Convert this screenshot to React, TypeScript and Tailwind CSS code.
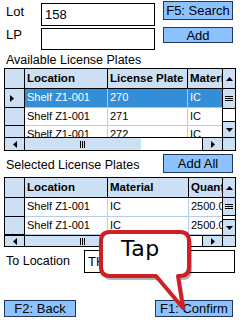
type Col = { label: string; w: string };
type Row = { cells: string[]; h: string; selected?: boolean; marker?: boolean };

const lightBlue = "bg-[#cddff2]";

function Tri({ dir }: { dir: "up" | "down" | "left" | "right" }) {
    if (dir === "up") return <svg width="7" height="4" viewBox="0 0 7 4"><polygon points="0,4 3.5,0 7,4" fill="#000" /></svg>;
    if (dir === "down") return <svg width="7" height="4" viewBox="0 0 7 4"><polygon points="0,0 7,0 3.5,4" fill="#000" /></svg>;
    if (dir === "left") return <svg width="4" height="7" viewBox="0 0 4 7"><polygon points="4,0 4,7 0,3.5" fill="#000" /></svg>;
    return <svg width="4" height="7" viewBox="0 0 4 7"><polygon points="0,0 0,7 4,3.5" fill="#000" /></svg>;
}

function Grip({ vertical }: { vertical?: boolean }) {
    // ≡ on the vertical bar, ||| on the horizontal one
    return vertical ? (
        <svg width="8" height="6" viewBox="0 0 8 6"><path d="M0 0.5H8M0 2.5H8M0 4.5H8" stroke="#000" strokeWidth="1" /></svg>
    ) : (
        <svg width="6" height="7" viewBox="0 0 6 7"><path d="M0.5 0V7M2.5 0V7M4.5 0V7" stroke="#000" strokeWidth="1" /></svg>
    );
}

function DataGrid({ cols, rows, bodyH, hbarH, thumbH, downH }: { cols: Col[]; rows: Row[]; bodyH: string; hbarH: string; thumbH: string; downH: string }) {
    return (
        <div className="mx-[4px] w-[232px] border border-black bg-white flex flex-col">
            <div className={`flex ${bodyH}`}>
                <div className="w-[217px] overflow-hidden">
                    <div className="flex h-[20px]">
                        <div className={`w-[20px] shrink-0 border-r border-b border-black ${lightBlue}`}></div>
                        {cols.map((c, i) => (
                            <div key={c.label} className={`${c.w} shrink-0 overflow-hidden whitespace-nowrap border-b border-black ${i < cols.length - 1 ? "border-r" : ""} ${lightBlue} pl-[2px] text-[11.5px] font-bold leading-[19px]`}>
                                {c.label}
                            </div>
                        ))}
                    </div>
                    {rows.map((r, ri) => (
                        <div key={ri} className={`flex ${r.h}`}>
                            <div className={`w-[20px] shrink-0 border-r border-b border-black ${lightBlue} flex items-center pl-[5px]`}>
                                {r.marker && <Tri dir="right" />}
                            </div>
                            {r.cells.map((t, i) => (
                                <div key={i} className={`${cols[i].w} shrink-0 overflow-hidden whitespace-nowrap border-b ${i < cols.length - 1 ? "border-r" : ""} ${r.selected ? "bg-[#338dd7] text-white border-[#a9cbeb]" : "border-[#b7cde7]"} pl-[2px] text-[11px] leading-[17px]`}>
                                    {t}
                                </div>
                            ))}
                        </div>
                    ))}
                </div>
                <div className={`w-[13px] border-l border-black ${lightBlue} flex flex-col`}>
                    <div className="h-[20px] border-b border-black flex items-center justify-center"><Tri dir="up" /></div>
                    <div className={`${thumbH} border-b border-black flex items-center justify-center`}><Grip vertical /></div>
                    <div className="flex-1 bg-white"></div>
                    <div className={`${downH} border-t border-black flex items-center justify-center`}><Tri dir="down" /></div>
                </div>
            </div>
            <div className={`flex ${hbarH} border-t border-black`}>
                <div className={`w-[20px] border-r border-black ${lightBlue} flex items-center justify-center`}><Tri dir="left" /></div>
                <div className={`w-[116px] ${lightBlue} flex items-center justify-center`}><Grip /></div>
                <div className="w-[61px] bg-white"></div>
                <div className={`w-[20px] border-l border-black ${lightBlue} flex items-center justify-center`}><Tri dir="right" /></div>
                <div className={`w-[13px] border-l border-black ${lightBlue}`}></div>
            </div>
        </div>
    );
}

function Btn({ children, className }: { children: string; className: string }) {
    return (
        <button className={`${className} bg-[#8cc3ff] border border-[#22385c] flex items-center justify-center text-[13px] leading-none text-black`}>
            {children}
        </button>
    );
}

export default function App() {
    return (
        <div className="relative w-[240px] h-[320px] overflow-hidden bg-white text-black flex flex-col font-['Liberation_Sans',Arial,sans-serif]">
            <div className="flex h-[26px] shrink-0">
                <span className="w-[41px] pl-[6px] pt-[4px] text-[13px] leading-[16px]">Lot</span>
                <div className="mt-[3px] w-[114px] h-[23px] border border-black pl-[3px] text-[13px] leading-[21px]">158</div>
                <Btn className="ml-[8px] mt-[1px] w-[70px] h-[19px]">F5: Search</Btn>
            </div>
            <div className="flex h-[24px] shrink-0">
                <span className="w-[41px] pl-[6px] pt-[1px] text-[13px] leading-[16px]">LP</span>
                <div className="mt-[2px] w-[114px] h-[22px] border border-black"></div>
                <Btn className="ml-[8px] mt-[1px] w-[70px] h-[16px]">Add</Btn>
            </div>
            <div className="h-[18px] shrink-0 pl-[6px] pt-[3px] text-[12.5px] leading-[15px]">Available License Plates</div>
            <DataGrid
                cols={[
                    { label: "Location", w: "w-[83px]" },
                    { label: "License Plate", w: "w-[80px]" },
                    { label: "Material", w: "w-[34px]" },
                ]}
                rows={[
                    { cells: ["Shelf Z1-001", "270", "IC"], h: "h-[19px]", selected: true, marker: true },
                    { cells: ["Shelf Z1-001", "271", "IC"], h: "h-[18px]" },
                    { cells: ["Shelf Z1-001", "272", "IC"], h: "h-[18px]" },
                ]}
                bodyH="h-[68px]"
                hbarH="h-[13px]"
                thumbH="h-[20px]"
                downH="h-[16px]"
            />
            <div className="flex h-[26px] shrink-0">
                <span className="pl-[6px] pt-[7px] text-[12.5px] leading-[15px]">Selected License Plates</span>
                <Btn className="ml-auto mr-[7px] mt-[3px] w-[70px] h-[19px]">Add All</Btn>
            </div>
            <DataGrid
                cols={[
                    { label: "Location", w: "w-[83px]" },
                    { label: "Material", w: "w-[81px]" },
                    { label: "Quantity", w: "w-[34px]" },
                ]}
                rows={[
                    { cells: ["Shelf Z1-001", "IC", "2500.000"], h: "h-[19px]" },
                    { cells: ["Shelf Z1-001", "IC", "2500.000"], h: "h-[18px]" },
                ]}
                bodyH="h-[57px]"
                hbarH="h-[11px]"
                thumbH="h-[18px]"
                downH="h-[16px]"
            />
            <div className="flex h-[27px] shrink-0">
                <span className="pl-[6px] pt-[7px] text-[12.5px] leading-[15px]">To Location</span>
                <div className="ml-auto mr-[5px] mt-[3px] w-[151px] h-[23px] border border-black pl-[3px] text-[13px] leading-[21px]">TH</div>
            </div>
            <div className="mt-auto mb-[3px] flex justify-between pl-[4px] pr-[7px]">
                <Btn className="w-[72px] h-[17px]">F2: Back</Btn>
                <Btn className="w-[78px] h-[17px]">F1: Confirm</Btn>
            </div>

            {/* callout pointing at the confirm button */}
            <svg className="absolute inset-0 pointer-events-none" width="240" height="320" viewBox="0 0 240 320">
                <path d="M112 235H182Q192 235 192 245V270Q192 280 182 280H181L186 311L159 280H112Q102 280 102 270V245Q102 235 112 235Z" fill="#000" opacity="0.3" />
                <path d="M110 232H180Q189 232 189 241V267Q189 276 180 276H178L183 308L156 276H110Q101 276 101 267V241Q101 232 110 232Z" fill="#fff" stroke="#cf1f24" strokeWidth="4" strokeLinejoin="round" />
            </svg>
            <span className="absolute left-[121px] top-[236px] text-[22px] leading-[26px] tracking-[0.5px] text-black font-['DejaVu_Sans',sans-serif]">Tap</span>
        </div>
    );
}
